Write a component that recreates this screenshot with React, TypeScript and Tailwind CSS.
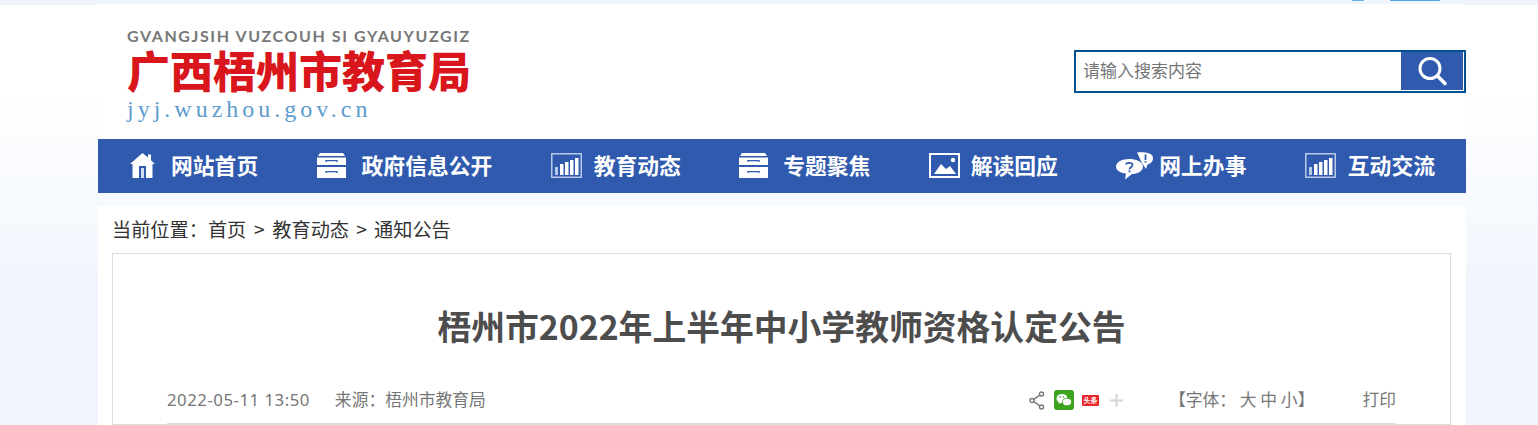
import React from 'react';

const HomeIcon = () => (
  <svg width="25" height="25" viewBox="0 0 25 25" fill="#fff">
    <path d="M12.5 0 L18 4.6 V1.5 H21 V7.2 L25 11 H22.5 V25 H2.5 V11 H0 Z" />
    <path d="M9 13 h7 v12 h-2 v-10 h-3 v10 h-2 z" fill="#2f5aae" />
    <path d="M11 15 h3 v10 h-3 z" fill="#cfdcf2" />
  </svg>
);

const DrawerIcon = () => (
  <svg width="29" height="25" viewBox="0 0 29 25" fill="#fff">
    <path d="M3 0 H26 L28 3 H1 Z" />
    <path d="M0 4.5 H29 V12 H0 Z" />
    <path d="M0 14 H29 V25 H0 Z" />
    <path d="M9 9 V7.6 H20 V9" fill="none" stroke="#2f5aae" strokeWidth="1.3" />
    <path d="M9 20 V18.6 H20 V20" fill="none" stroke="#2f5aae" strokeWidth="1.3" />
  </svg>
);

const ChartIcon = () => (
  <svg width="31" height="25" viewBox="0 0 31 25">
    <rect x="0.75" y="0.75" width="29.5" height="23.5" fill="none" stroke="#b9c9e8" strokeWidth="1.5" />
    <g fill="#fff">
      <rect x="4" y="14" width="3" height="8" fill="#b9c9e8" />
      <rect x="9" y="11" width="3.5" height="11" />
      <rect x="14" y="9" width="3.5" height="13" />
      <rect x="19" y="7" width="3.5" height="15" />
      <rect x="24" y="5" width="3.5" height="17" />
    </g>
  </svg>
);

const PictureIcon = () => (
  <svg width="31" height="25" viewBox="0 0 31 25">
    <rect x="1" y="1" width="29" height="23" fill="none" stroke="#fff" strokeWidth="2" />
    <path d="M5 21 L12 11 L17 16 L21 13 L27 21 Z" fill="#fff" />
    <circle cx="24" cy="7" r="2.2" fill="#fff" />
  </svg>
);

const BubbleIcon = () => (
  <svg width="40" height="28" viewBox="0 0 40 28" fill="#fff">
    <path d="M21 0.5 C27 -0.5 37 0.5 37 6 C37 10 34 12 31.5 12.5 L30 17 L27 12.5 C24 8 23 4 21 0.5 Z" />
    <path d="M13 7 C20 7 27 9.5 27 14.5 C27 19.5 21 22 16 22 L9 27.5 L10 21.5 C4 21 0 18.5 0 14.5 C0 10 6 7 13 7 Z" />
    <path d="M10 12.5 C10 10.5 16.5 10 16.5 13 C16.5 15.5 13.5 15 13.5 17.5" fill="none" stroke="#2f5aae" strokeWidth="1.7" />
    <rect x="12.6" y="18.5" width="1.8" height="1.8" fill="#2f5aae" />
    <rect x="28.6" y="2.5" width="1.8" height="5.5" fill="#2f5aae" />
    <rect x="28.6" y="9" width="1.8" height="1.6" fill="#2f5aae" />
  </svg>
);

const navItems = [
  { label: '网站首页', icon: <HomeIcon />, gap: 'gap-4' },
  { label: '政府信息公开', icon: <DrawerIcon />, gap: 'gap-4' },
  { label: '教育动态', icon: <ChartIcon />, gap: 'gap-3' },
  { label: '专题聚焦', icon: <DrawerIcon />, gap: 'gap-[15px]' },
  { label: '解读回应', icon: <PictureIcon />, gap: 'gap-[11px]' },
  { label: '网上办事', icon: <BubbleIcon />, gap: 'gap-[3px]' },
  { label: '互动交流', icon: <ChartIcon />, gap: 'gap-3' },
];

const Logo = () => (
  <div className="mt-[23px] flex w-[344px] flex-col self-start">
    <div className="h-[18px] whitespace-nowrap font-[Lato,sans-serif] text-[16px] font-bold leading-[18px] tracking-[1.58px] text-[#777777]">
      GVANGJSIH VUZCOUH SI GYAUYUZGIZ
    </div>
    <div className="mt-[2px] h-[44px] whitespace-nowrap text-[43px] font-black leading-[44px] text-[#d9161c]">
      广西梧州市教育局
    </div>
    <div className="mt-[5px] whitespace-nowrap font-['Liberation_Serif',serif] text-[24px] leading-[26px] tracking-[4px] text-[#5e9ccb]">
      jyj.wuzhou.gov.cn
    </div>
  </div>
);

const SearchBox = () => (
  <div className="flex h-[43px] w-[392px] border-2 border-[#005293] bg-white pr-[1px]">
    <div className="flex-1 pl-[7px] text-[17px] leading-[35px] text-[#757575]">请输入搜索内容</div>
    <div className="mb-[1px] flex w-[62px] items-center justify-center bg-[#2f5aae]">
      <svg width="32" height="32" viewBox="0 0 32 32" fill="none" stroke="#fff">
        <circle cx="14" cy="13.5" r="10" strokeWidth="3" />
        <path d="M21.5 21 L29 28.5" strokeWidth="3.6" strokeLinecap="round" />
      </svg>
    </div>
  </div>
);

const ShareTools = () => (
  <div className="flex items-center">
    <svg width="16" height="19" viewBox="0 0 16 19" fill="none" stroke="#777" strokeWidth="1.4">
      <circle cx="12.5" cy="3" r="2" />
      <circle cx="3" cy="9.5" r="2" />
      <circle cx="12.5" cy="16" r="2" />
      <path d="M4.8 8.3 L10.8 4.2 M4.8 10.7 L10.8 14.8" />
    </svg>
    <svg className="ml-[9px]" width="20" height="20" viewBox="0 0 20 20">
      <rect width="20" height="20" rx="3" fill="#3da51d" />
      <ellipse cx="8" cy="8.5" rx="5.5" ry="4.5" fill="#fff" />
      <path d="M5 11 L4.5 14 L8 12 Z" fill="#fff" />
      <ellipse cx="13" cy="12" rx="4.5" ry="3.7" fill="#fff" stroke="#3da51d" strokeWidth="0.8" />
      <circle cx="6.3" cy="7" r="0.8" fill="#3da51d" />
      <circle cx="9.5" cy="7" r="0.8" fill="#3da51d" />
    </svg>
    <div className="ml-[8px] flex h-[11px] w-[17px] items-center justify-center rounded-[1px] bg-[#e8262b] text-[7px] font-bold leading-none text-white">
      头条
    </div>
    <svg className="ml-[11px]" width="13" height="13" viewBox="0 0 13 13" fill="#d6d6d6">
      <rect x="5.5" width="2" height="13" />
      <rect y="5.5" width="13" height="2" />
    </svg>
  </div>
);

export default function App() {
  return (
    <div className="relative h-[425px] overflow-hidden bg-[linear-gradient(to_bottom,#f0f5fd_0px,#f0f5fd_4px,#e9f2fc_4px,#e9f2fc_5px,#ffffff_5px,#ffffff_90px,#f0f5fd_290px)] pt-[4px] font-['Noto_Sans_CJK_SC','Noto_Sans',sans-serif] text-[#333333]">
      {/* bottom edge of the top bar buttons, cut off by the window */}
      <div className="absolute left-[1352px] top-0 h-[1px] w-[12px] rounded-b-sm bg-[#62ade9]" />
      <div className="absolute left-[1390px] top-0 h-[1px] w-[50px] rounded-b-sm bg-[#4ea2e8]" />

      <div className="ml-[98px] w-[1368px]">
        <header className="flex h-[135px] items-center justify-between bg-white pl-[29px]">
          <Logo />
          <SearchBox />
        </header>

        <nav className="flex h-[54px] items-center justify-between bg-[#2f5aae] pb-[1px] pl-[32px] pr-[31px]">
          {navItems.map((item) => (
            <div key={item.label} className={`flex items-center ${item.gap}`}>
              {item.icon}
              <span className="whitespace-nowrap pb-[1px] text-[21.8px] font-bold leading-none text-white">
                {item.label}
              </span>
            </div>
          ))}
        </nav>

        <main className="mt-[13px] bg-white pl-[14px] pr-[15px]">
          <div className="flex h-[47px] items-center whitespace-nowrap text-[19.2px] leading-none">
            <span>当前位置：首页</span>
            <span className="w-[26px] text-center">&gt;</span>
            <span>教育动态</span>
            <span className="w-[25px] text-center">&gt;</span>
            <span>通知公告</span>
          </div>
          <article className="border border-[#dddddd] px-[54px]">
            <h1 className="pt-[49px] text-center text-[33.8px] font-bold leading-[46px] text-[#4d4d4d]">
              梧州市2022年上半年中小学教师资格认定公告
            </h1>
            <div className="mt-[31px] flex h-[44px] items-center justify-between border-b border-[#dddddd] pb-[3px] text-[16.8px] text-[#777777]">
              <div className="flex gap-[25px]">
                <span className="font-['Noto_Sans',sans-serif] tracking-[0.5px]">2022-05-11 13:50</span>
                <span>来源：梧州市教育局</span>
              </div>
              <div className="flex items-center">
                <ShareTools />
                <span className="ml-[46px]">【字体： 大 中 小】</span>
                <span className="ml-[48px]">打印</span>
              </div>
            </div>
          </article>
        </main>
      </div>
    </div>
  );
}
